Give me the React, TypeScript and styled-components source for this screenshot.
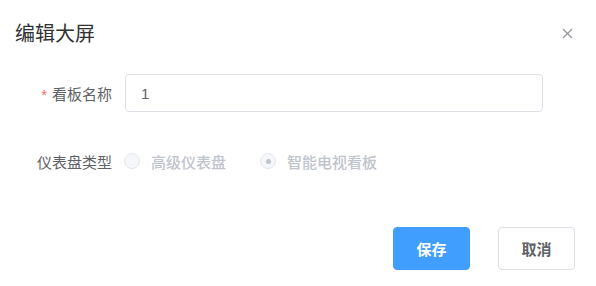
import React from 'react';
import styled, {createGlobalStyle} from "styled-components";

const GlobalStyle = createGlobalStyle`
    body {
        margin: 0;
        background: #ffffff;
        font-family: "Liberation Sans", "Noto Sans CJK SC", sans-serif;
    }
`

export default function App() {
    return (
        <>
            <GlobalStyle/>
            <Dialog>
                <Header>
                    <Title>编辑大屏</Title>
                    <Close aria-label="close">
                        <svg width="11" height="11" viewBox="0 0 11 11">
                            <path d="M1 1L10 10M10 1L1 10" stroke="#909399" strokeWidth="1.2" fill="none"/>
                        </svg>
                    </Close>
                </Header>
                <Form>
                    <Row>
                        <Label required>看板名称</Label>
                        <Input defaultValue="1"/>
                    </Row>
                    <Row>
                        <Label>仪表盘类型</Label>
                        <RadioGroup>
                            <Radio>
                                <Circle/>
                                <RadioText>高级仪表盘</RadioText>
                            </Radio>
                            <Radio>
                                <Circle checked/>
                                <RadioText>智能电视看板</RadioText>
                            </Radio>
                        </RadioGroup>
                    </Row>
                </Form>
                <Footer>
                    <Button primary>保存</Button>
                    <Button>取消</Button>
                </Footer>
            </Dialog>
        </>
    );
}

const Dialog = styled.div`
    width: 596px;
    height: 286px;
    box-sizing: border-box;
    background: #fff;
`

const Header = styled.div`
    display: flex;
    justify-content: space-between;
    align-items: center;
    padding: 20px 23px 0 15px;
    height: 28px;
`

const Title = styled.span`
    font-size: 20px;
    line-height: 28px;
    color: #303133;
`

const Close = styled.span`
    display: flex;
    margin-top: -2px;
`

const Form = styled.div`
    display: flex;
    flex-direction: column;
    gap: 30px;
    margin-top: 26px;
    padding-right: 53px;
`

const Row = styled.div`
    display: flex;
    align-items: center;
    height: 38px;
`

const Label = styled.label<{ required?: boolean }>`
    width: 125px;
    box-sizing: border-box;
    padding-right: 13px;
    text-align: right;
    font-size: 15px;
    color: #606266;

    &::before {
        content: ${p => p.required ? '"*"' : 'none'};
        color: #f56c6c;
        margin-right: 5px;
    }
`

const Input = styled.input`
    flex: 1;
    height: 38px;
    box-sizing: border-box;
    border: 1px solid #dcdfe6;
    border-radius: 4px;
    padding: 0 15px;
    font-family: inherit;
    font-size: 15px;
    color: #606266;
    outline: none;
`

const RadioGroup = styled.div`
    display: flex;
    align-items: center;
    gap: 34px;
    margin-left: -1px;
`

const Radio = styled.span`
    display: flex;
    align-items: center;
    gap: 11px;
`

const Circle = styled.span<{ checked?: boolean }>`
    width: 16px;
    height: 16px;
    box-sizing: border-box;
    border: 1px solid #e4e7ed;
    border-radius: 50%;
    background: #f5f7fa;
    display: flex;
    align-items: center;
    justify-content: center;

    &::after {
        content: "";
        display: ${p => p.checked ? 'block' : 'none'};
        width: 5px;
        height: 5px;
        border-radius: 50%;
        background: #c0c4cc;
    }
`

const RadioText = styled.span`
    font-size: 15px;
    color: #c0c4cc;
    font-weight: 500;
`

const Footer = styled.div`
    display: flex;
    justify-content: flex-end;
    gap: 28px;
    margin-top: 47px;
    padding-right: 21px;
`

const Button = styled.button<{ primary?: boolean }>`
    width: 77px;
    height: 43px;
    box-sizing: border-box;
    border-radius: 4px;
    border: 1px solid ${p => p.primary ? '#409eff' : '#dcdfe6'};
    background: ${p => p.primary ? '#409eff' : '#fff'};
    color: ${p => p.primary ? '#fff' : '#606266'};
    font-family: inherit;
    font-size: 15px;
    font-weight: 700;
    padding: 0;
`
